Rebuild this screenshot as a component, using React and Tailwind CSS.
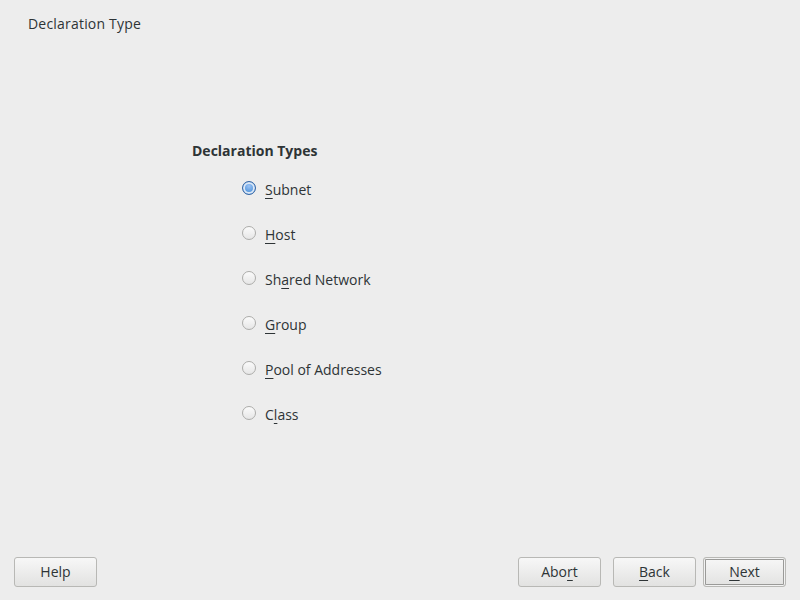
import React, { useState } from 'react';

const options = [
    { pre: '', key: 'S', post: 'ubnet' },
    { pre: '', key: 'H', post: 'ost' },
    { pre: 'Sh', key: 'a', post: 'red Network' },
    { pre: '', key: 'G', post: 'roup' },
    { pre: '', key: 'P', post: 'ool of Addresses' },
    { pre: 'C', key: 'l', post: 'ass' },
];

function Mn({ pre, k, post }) {
    return (
        <span>
            {pre}
            <span className="underline underline-offset-[3px] decoration-1">{k}</span>
            {post}
        </span>
    );
}

function Btn({ children, isDefault }) {
    return (
        <button
            className={`w-[83px] h-[30px] rounded-[3px] border border-[#b8b8b5] bg-gradient-to-b from-[#f7f7f7] to-[#e2e2e1] text-[#2e3436] ${isDefault ? 'shadow-[inset_0_0_0_1px_#f2f2f2,inset_0_0_0_2px_#9a9a98]' : ''
                }`}
        >
            {children}
        </button>
    );
}

export default function App() {
    const [sel, setSel] = useState(0);

    return (
        <div
            className="w-[800px] h-[600px] bg-[#ededed] flex flex-col text-[#2e3436] text-[14px] leading-[18px]"
            style={{ fontFamily: '"Open Sans", sans-serif' }}
        >
            {/* title */}
            <div className="pl-[28px] pt-[15px] tracking-[0.2px]">Declaration Type</div>

            {/* radio group */}
            <div className="flex-1 pl-[192px] pt-[109px]">
                <div className="font-bold">Declaration Types</div>
                <div className="mt-[7px] pl-[50px]">
                    {options.map((o, i) => (
                        <div
                            key={i}
                            className="h-[45px] flex items-center gap-[9px] cursor-default"
                            onClick={() => setSel(i)}
                        >
                            {sel === i ? (
                                <span className="w-[14px] h-[14px] -mt-[4px] rounded-full border border-[#3465a4] bg-[radial-gradient(circle_at_50%_35%,#9cc3f5,#4a90d9_70%)] shadow-[inset_0_0_0_2px_#dbe7f6]" />
                            ) : (
                                <span className="w-[14px] h-[14px] -mt-[4px] rounded-full border border-[#acacaa] bg-gradient-to-b from-[#fbfbfb] to-[#e6e6e6]" />
                            )}
                            <Mn pre={o.pre} k={o.key} post={o.post} />
                        </div>
                    ))}
                </div>
            </div>

            {/* buttons */}
            <div className="flex items-center px-[14px] pb-[13px]">
                <Btn>Help</Btn>
                <div className="flex-1" />
                <Btn>
                    <Mn pre="Abo" k="r" post="t" />
                </Btn>
                <div className="w-[12px]" />
                <Btn>
                    <Mn pre="" k="B" post="ack" />
                </Btn>
                <div className="w-[7px]" />
                <Btn isDefault>
                    <Mn pre="" k="N" post="ext" />
                </Btn>
            </div>
        </div>
    );
}
